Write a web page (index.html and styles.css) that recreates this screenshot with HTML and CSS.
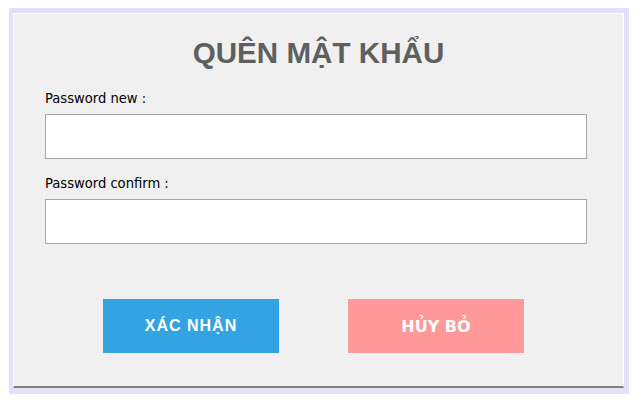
FILE: index.html
```html
<!DOCTYPE html>
<html lang="vi">
<head>
<meta charset="utf-8">
<title>Quên mật khẩu</title>
<link rel="stylesheet" href="styles.css">
</head>
<body>
<div class="frame">
  <div class="panel">
    <h1 class="title">QUÊN MẬT KHẨU</h1>
    <label class="label label-first" for="pw-new">Password new :</label>
    <input class="field" id="pw-new" type="password">
    <label class="label label-second" for="pw-confirm">Password confirm :</label>
    <input class="field" id="pw-confirm" type="password">
    <div class="actions">
      <button class="btn btn-ok" type="button">XÁC NHẬN</button>
      <button class="btn btn-cancel" type="button">HỦY BỎ</button>
    </div>
  </div>
</div>
</body>
</html>
```

FILE: styles.css
```css
html, body {
  margin: 0;
  padding: 0;
  background: #ffffff;
}

.frame {
  box-sizing: border-box;
  margin: 8px 0 0 9px;
  width: 620px;
  height: 386px;
  padding: 5px 5px 6px 4px;
  background: #e1e1fc;
}

.panel {
  box-sizing: border-box;
  height: 100%;
  background: #f0f0f0;
  border-top: 1px solid #ffffff;
  border-left: 1px solid #ffffff;
  border-right: 1px solid #ffffff;
  border-bottom: 2px solid #808080;
  padding: 22px 0 0 31px;
}

.title {
  margin: 0 0 0 -31px;
  font-family: "Liberation Sans", Arial, sans-serif;
  font-weight: bold;
  font-size: 29.6px;
  line-height: 34px;
  color: #5f5f5f;
  text-align: center;
}

.label {
  display: block;
  font-family: "DejaVu Sans Condensed", "DejaVu Sans", sans-serif;
  font-size: 14.6px;
  line-height: 18px;
  color: #000000;
}

.label-first {
  margin-top: 19px;
}

.label-second {
  margin-top: 15px;
}

.field {
  display: block;
  box-sizing: border-box;
  margin: 7px 0 0 0;
  width: 542px;
  height: 45px;
  border: 1px solid #a9a9a9;
  background: #ffffff;
  padding: 0 6px;
  outline: none;
}

.actions {
  display: flex;
  gap: 69px;
  margin-top: 55px;
  padding-left: 58px;
}

.btn {
  width: 176px;
  height: 54px;
  border: none;
  margin: 0;
  padding: 0;
  color: #ffffff;
  font-weight: bold;
  font-size: 16px;
  cursor: pointer;
}

.btn-ok {
  background: #33a3e1;
  font-family: "Liberation Sans", Arial, sans-serif;
  letter-spacing: 1px;
}

.btn-cancel {
  background: #ff9999;
  font-family: "DejaVu Sans", sans-serif;
}
```
